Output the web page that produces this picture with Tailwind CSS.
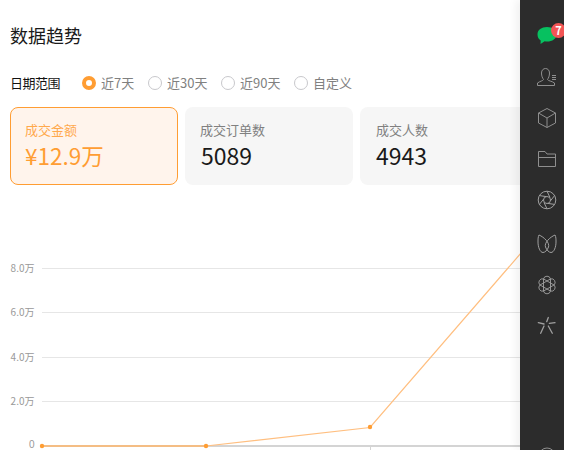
<!DOCTYPE html>
<html lang="zh">
<head>
<meta charset="utf-8">
<script src="https://cdn.jsdelivr.net/npm/@tailwindcss/browser@4"></script>
</head>
<body class="m-0 bg-white">
<div class="relative w-[564px] h-[450px] overflow-hidden bg-white font-['Noto_Sans_CJK_SC','Noto_Sans',sans-serif]">
  <main class="flex flex-col w-[564px] pl-[10px]">
    <h1 class="mt-[22px] h-[26px] text-[18px] leading-[26px] font-normal text-[#1a1a1a]">数据趋势</h1>
    <div class="flex items-center mt-[23px] h-[24px] text-[13px] leading-[24px]">
      <span class="w-[72px] text-[#111111] tracking-[-0.5px]">日期范围</span>
      <label class="flex items-center gap-[5px] w-[66px] text-[#808080]"><span class="w-[14px] h-[14px] rounded-full border-[4px] border-[#ff9d33] bg-white"></span>近7天</label>
      <label class="flex items-center gap-[5px] w-[73px] text-[#808080]"><span class="w-[14px] h-[14px] rounded-full border border-[#c8c8cc] bg-white"></span>近30天</label>
      <label class="flex items-center gap-[5px] w-[73px] text-[#808080]"><span class="w-[14px] h-[14px] rounded-full border border-[#c8c8cc] bg-white"></span>近90天</label>
      <label class="flex items-center gap-[5px] text-[#808080]"><span class="w-[14px] h-[14px] rounded-full border border-[#c8c8cc] bg-white"></span>自定义</label>
    </div>
    <div class="flex gap-[7px] mt-[12px] w-[700px]">
      <div class="w-[168px] h-[78px] rounded-[8px] border border-[#ff9d33] bg-[#fff4ec] pl-[14px] pt-[12px]">
        <div class="text-[13px] leading-[20px] text-[#ffa94d]">成交金额</div>
        <div class="text-[22.500px] leading-[30px] text-[#ff9d33]">¥12.9万</div>
      </div>
      <div class="w-[168px] h-[78px] rounded-[8px] bg-[#f6f6f6] pl-[15px] pt-[13px]">
        <div class="text-[13px] leading-[20px] text-[#808080]">成交订单数</div>
        <div class="text-[23px] leading-[30px] pl-[1px] text-[#1a1a1a]">5089</div>
      </div>
      <div class="w-[168px] h-[78px] rounded-[8px] bg-[#f6f6f6] pl-[16px] pt-[13px]">
        <div class="text-[13px] leading-[20px] text-[#808080]">成交人数</div>
        <div class="text-[23px] leading-[30px] text-[#1a1a1a]">4943</div>
      </div>
    </div>
  </main>

  <svg class="absolute left-0 top-[250px]" width="564" height="200" viewBox="0 250 564 200" font-family="Noto Sans CJK SC, sans-serif" font-size="10" fill="#999999">
    <g stroke="#e6e6e6" stroke-width="1">
      <path d="M42 268.500H564"/>
      <path d="M42 312.500H564"/>
      <path d="M42 357.500H564"/>
      <path d="M42 401.500H564"/>
    </g>
    <path d="M42 446H564" stroke="#d4d4d4" stroke-width="2"/>
    <path d="M370.500 447V450" stroke="#d4d4d4" stroke-width="1"/>
    <text x="34.500" y="271.500" text-anchor="end">8.0万</text>
    <text x="34.500" y="315.500" text-anchor="end">6.0万</text>
    <text x="34.500" y="360.500" text-anchor="end">4.0万</text>
    <text x="34.500" y="404.500" text-anchor="end">2.0万</text>
    <text x="34.500" y="447.800" text-anchor="end" font-family="Liberation Sans, sans-serif">0</text>
    <path d="M42 446L206 446L370 427.500L534 238" fill="none" stroke="#ffbf80" stroke-width="1.200"/>
    <path d="M42 446L206 446" fill="none" stroke="#f7b877" stroke-width="1.500"/>
    <circle cx="42" cy="446" r="2.200" fill="#ff9d33"/>
    <circle cx="206" cy="446" r="2.200" fill="#ff9d33"/>
    <circle cx="370" cy="427" r="2.200" fill="#ff9d33"/>
  </svg>

  <aside class="absolute top-0 right-0 w-[44px] h-[450px] bg-[#2c2c2c] shadow-[-4px_0_8px_rgba(0,0,0,0.06)]">
    <svg class="absolute top-[26px] left-[17px]" width="20" height="19" viewBox="0 0 20 19"><path d="M10 1C15.500 1 19.500 3.800 19.500 8.500C19.500 12.800 15.500 15.500 10 15.500C9.200 15.500 8.400 15.400 7.700 15.300L3.500 18L3.700 14.500C1.500 13.200 .5 11 .5 8.500C.5 3.800 4.500 1 10 1Z" fill="#07c160"/></svg>
    <span class="absolute top-[23px] left-[31px] w-[15px] h-[15px] rounded-full bg-[#f25555] text-white text-[11px] leading-[15px] text-center font-bold">7</span>

    <nav class="absolute left-[17px] top-[56px] flex flex-col">
      <div class="h-[41px] flex items-center"><svg width="20" height="20" viewBox="0 0 20 20" fill="none" stroke="#8f8f8f" stroke-width="1"><path d="M.5 18.500V16C3 14 6 14 6.500 12.500C5.500 11 4.500 9 4.500 6C4.500 3 6.500 1.500 8.500 1.500C10.500 1.500 12.500 3 12.500 6C12.500 9 11.500 11 10.500 12.500C11 14 15 14 17.500 16V18.500Z"/><path d="M15 8.500H19M15 10.500H19M15 12.500H19"/></svg></div>
      <div class="h-[41px] flex items-center"><svg width="20" height="22" viewBox="0 0 20 22" fill="none" stroke="#8f8f8f" stroke-width="1"><path d="M10 1.500L18.500 6V16L10 20.500L1.500 16V6Z"/><path d="M1.500 6L10 11L18.500 6M10 11V20.500"/></svg></div>
      <div class="h-[41px] flex items-center"><svg width="20" height="18" viewBox="0 0 20 18" fill="none" stroke="#8f8f8f" stroke-width="1"><path d="M1.500 1.500H8L10 4H18.500V16.500H1.500Z"/><path d="M1.500 7.500H18.500"/></svg></div>
      <div class="h-[41px] flex items-center"><svg width="20" height="20" viewBox="0 0 20 20" fill="none" stroke="#a0a0a0" stroke-width="1"><circle cx="10" cy="10" r="8.800"/><circle cx="10" cy="10" r="3.500"/><path d="M10 1.200L13 7.500M17.600 5.600L13.400 10.900M17.600 14.400L10.800 13.400M10 18.800L7 12.500M2.400 14.400L6.600 9.100M2.400 5.600L9.200 6.600"/></svg></div>
      <div class="h-[41px] mt-[3px] flex items-center"><svg width="20" height="20" viewBox="0 0 20 20" fill="none" stroke="#a0a0a0" stroke-width="1"><path d="M2 1C7 3 13 9 11.500 13C10.500 16 8 18.500 6 18.500C3 18.500 1 13 1 8C1 5 1 3 2 1Z"/><path d="M18 1C13 3 7 9 8.500 13C9.500 16 12 18.500 14 18.500C17 18.500 19 13 19 8C19 5 19 3 18 1Z"/></svg></div>
      <div class="h-[41px] flex items-center"><svg width="20" height="20" viewBox="0 0 20 20" fill="none" stroke="#a0a0a0" stroke-width="0.900" stroke-linejoin="round"><path d="M6.500 3.940A3.600 3.600 0 0 1 13.500 3.940A3.600 3.600 0 0 1 17 10A3.600 3.600 0 0 1 13.500 16.060A3.600 3.600 0 0 1 6.500 16.060A3.600 3.600 0 0 1 3 10A3.600 3.600 0 0 1 6.500 3.940Z"/><path d="M13.500 3.940L13.500 16.060L3 10ZM6.500 3.940L17 10L6.500 16.060Z"/></svg></div>
      <div class="h-[41px] flex items-center"><svg width="20" height="20" viewBox="0 0 20 20" fill="none" stroke="#a0a0a0" stroke-width="1.300" stroke-linecap="round"><path d="M11.300 1.500L9.700 5.700M1.300 6.700L7 8M12.300 7.300L18 6.700M7 10L3.700 17.300M11.300 10L15.300 17.300"/></svg></div>
    </nav>

    <svg class="absolute left-[17px] top-[446px]" width="20" height="20" viewBox="0 0 20 20" fill="none" stroke="#8f8f8f" stroke-width="1"><circle cx="10" cy="10" r="8"/></svg>
  </aside>
</div>
</body>
</html>
